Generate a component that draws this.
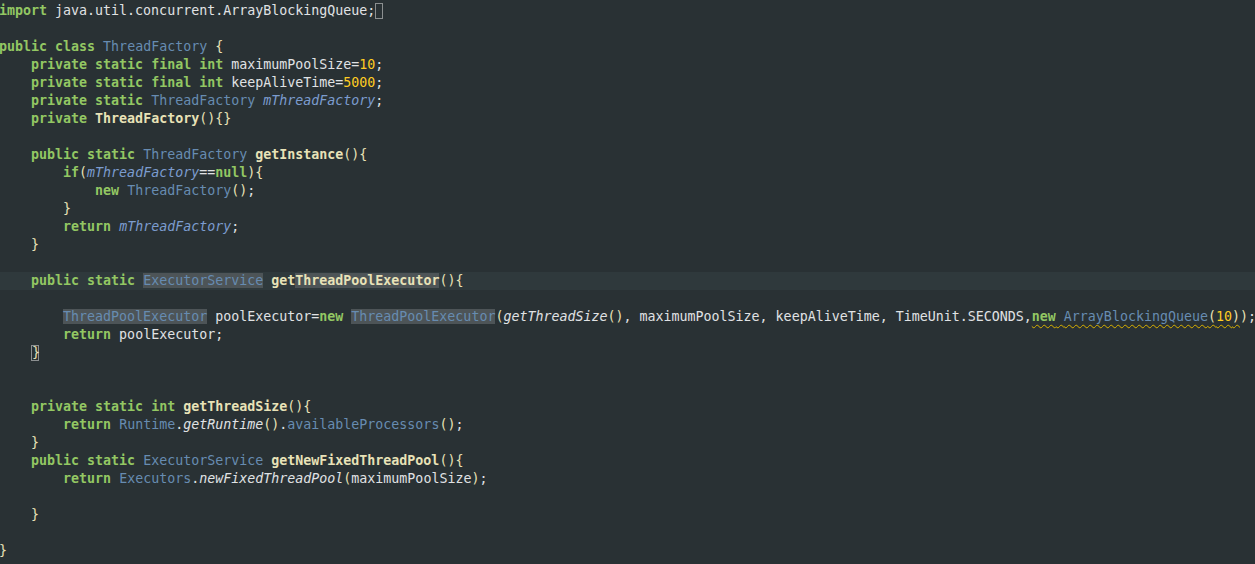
import React from 'react';

// Obsidian-like palette
const K = ({ children }) => <span className="font-bold text-[#93c763]">{children}</span>;
const T = ({ children, hl }) => (
  <span className={`text-[#678cb1] ${hl ? 'bg-[#4d5457]' : ''}`}>{children}</span>
);
const F = ({ children }) => <span className="italic text-[#7c9ccf]">{children}</span>;
const M = ({ children }) => <span className="font-bold text-[#e8e2b7]">{children}</span>;
const B = ({ children }) => <span className="text-[#e8e2b7]">{children}</span>;
const N = ({ children }) => <span className="text-[#ffcd22]">{children}</span>;
const I = ({ children }) => <span className="italic text-[#e0e2e4]">{children}</span>;

const Box = ({ children }) => (
  <span className="inline-block h-[16px] w-[8px] border border-[#8b8f90] align-middle leading-[14px] box-border indent-0">
    {children}
  </span>
);

function Line({ children, current }) {
  return (
    <div className={`h-[18px] leading-[18px] whitespace-pre -indent-[1px] ${current ? 'bg-[#2f393c]' : ''}`}>
      {children}
      {!children && ' '}
    </div>
  );
}

export default function App() {
  const tab = '    ';
  return (
    <div
      className="w-[1255px] h-[564px] overflow-hidden bg-[#293134] text-[#e0e2e4] pt-[2px] text-[13.3px]"
      style={{ fontFamily: '"DejaVu Sans Mono", "Liberation Mono", monospace' }}
    >
      <Line>
        <K>import</K> java.util.concurrent.ArrayBlockingQueue;<Box />
      </Line>
      <Line />
      <Line>
        <K>public</K> <K>class</K> <T>ThreadFactory</T> <B>{'{'}</B>
      </Line>
      <Line>
        {tab}<K>private</K> <K>static</K> <K>final</K> <K>int</K> maximumPoolSize=<N>10</N>;
      </Line>
      <Line>
        {tab}<K>private</K> <K>static</K> <K>final</K> <K>int</K> keepAliveTime=<N>5000</N>;
      </Line>
      <Line>
        {tab}<K>private</K> <K>static</K> <T>ThreadFactory</T> <F>mThreadFactory</F>;
      </Line>
      <Line>
        {tab}<K>private</K> <M>ThreadFactory</M><B>(){'{}'}</B>
      </Line>
      <Line />
      <Line>
        {tab}<K>public</K> <K>static</K> <T>ThreadFactory</T> <M>getInstance</M><B>(){'{'}</B>
      </Line>
      <Line>
        {tab}{tab}<K>if</K><B>(</B><F>mThreadFactory</F>==<K>null</K><B>){'{'}</B>
      </Line>
      <Line>
        {tab}{tab}{tab}<K>new</K> <T>ThreadFactory</T><B>()</B>;
      </Line>
      <Line>
        {tab}{tab}<B>{'}'}</B>
      </Line>
      <Line>
        {tab}{tab}<K>return</K> <F>mThreadFactory</F>;
      </Line>
      <Line>
        {tab}<B>{'}'}</B>
      </Line>
      <Line />
      <Line current>
        {tab}<K>public</K> <K>static</K> <T hl>ExecutorService</T>{' '}
        <span className="font-bold text-[#e8e2b7]">get</span>
        <span className="font-bold text-[#e8e2b7] bg-[#4d5457]">ThreadPoolExecutor</span>
        <B>(){'{'}</B>
      </Line>
      <Line />
      <Line>
        {tab}{tab}<T hl>ThreadPoolExecutor</T> poolExecutor=<K>new</K> <T hl>ThreadPoolExecutor</T>
        <B>(</B><I>getThreadSize</I><B>()</B>, maximumPoolSize, keepAliveTime, TimeUnit.SECONDS,
        <span className="underline decoration-wavy decoration-[#d9b100] decoration-1 underline-offset-[3px]">
          <K>new</K> <T>ArrayBlockingQueue</T><B>(</B><N>10</N><B>)</B>
        </span>
        <B>)</B>;
      </Line>
      <Line>
        {tab}{tab}<K>return</K> poolExecutor;
      </Line>
      <Line>
        {tab}<Box><B>{'}'}</B></Box>
      </Line>
      <Line />
      <Line />
      <Line>
        {tab}<K>private</K> <K>static</K> <K>int</K> <M>getThreadSize</M><B>(){'{'}</B>
      </Line>
      <Line>
        {tab}{tab}<K>return</K> <T>Runtime</T>.<I>getRuntime</I><B>()</B>.<T>availableProcessors</T><B>()</B>;
      </Line>
      <Line>
        {tab}<B>{'}'}</B>
      </Line>
      <Line>
        {tab}<K>public</K> <K>static</K> <T>ExecutorService</T> <M>getNewFixedThreadPool</M><B>(){'{'}</B>
      </Line>
      <Line>
        {tab}{tab}<K>return</K> <T>Executors</T>.<I>newFixedThreadPool</I><B>(</B>maximumPoolSize<B>)</B>;
      </Line>
      <Line />
      <Line>
        {tab}<B>{'}'}</B>
      </Line>
      <Line />
      <Line>
        <B>{'}'}</B>
      </Line>
    </div>
  );
}
